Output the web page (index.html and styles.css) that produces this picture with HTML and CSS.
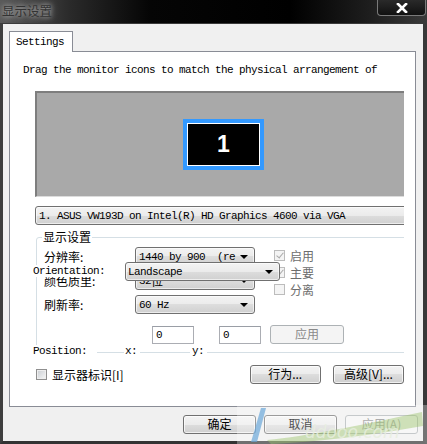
FILE: index.html
```html
<!DOCTYPE html>
<html lang="zh-CN">
<head>
    <meta charset="UTF-8">
    <title>显示设置</title>
    <link rel="stylesheet" href="styles.css">
</head>
<body>
    <div class="window">
        <div class="titlebar">
            <div class="title">显示设置</div>
            <div class="close">
                <svg width="12" height="10" viewBox="0 0 12 10"><path d="M2 1 L10 9 M10 1 L2 9" stroke="#fff" stroke-width="2.6" stroke-linecap="square"/></svg>
            </div>
        </div>
        <div class="frame">
            <div class="tabs"><div class="tab mono">Settings</div></div>
            <div class="panel">
                <div class="inner">
                    <p class="hint mono">Drag the monitor icons to match the physical arrangement of</p>
                    <div class="arrange">
                        <div class="monitor">1</div>
                    </div>
                    <div class="combo wide mono">1. ASUS VW193D on Intel(R) HD Graphics 4600 via VGA</div>

                    <fieldset class="group">
                        <legend>显示设置</legend>
                        <div class="group-body">
                            <div class="rows">
                                <div class="row"><span class="label">分辨率:</span><div class="combo mono">1440 by 900 &nbsp;(re</div></div>
                                <div class="row"><span class="label">颜色质里:</span><div class="combo mono">32 <span class="cjk">位</span></div></div>
                                <div class="row"><span class="label">刷新率:</span><div class="combo mono">60 Hz</div></div>
                            </div>
                            <div class="checks">
                                <div class="check off"><span class="box checked"></span>启用</div>
                                <div class="check off"><span class="box checked"></span>主要</div>
                                <div class="check off"><span class="box"></span>分离</div>
                            </div>
                        </div>
                        <div class="pos-inputs">
                            <div class="field mono">0</div>
                            <div class="field mono">0</div>
                            <div class="btn disabled">应用</div>
                        </div>
                    </fieldset>

                    <span class="orient mono">Orientation:</span>
                    <div class="combo landscape mono">Landscape</div>
                    <div class="position mono">
                        <span class="pos-label">Position:</span>
                        <span class="pos-x">x:</span>
                        <span class="pos-y">y:</span>
                    </div>

                    <div class="actions">
                        <div class="check ident"><span class="box"></span>显示器标识[I]</div>
                        <div class="btn">行为...</div>
                        <div class="btn">高级[V]...</div>
                    </div>
                </div>
            </div>
            <div class="footer">
                <div class="btn">确定</div>
                <div class="btn">取消</div>
                <div class="btn disabled">应用(A)</div>
            </div>
        </div>
        <svg class="watermark" width="190" height="48" viewBox="0 0 190 48">
            <rect x="0" y="9" width="190" height="39" fill="#fff" opacity="0.3"/>
            <path d="M14 46 L24 12 L29 12 L20 46 Z" fill="#6aa6d8" opacity="0.7"/>
            <path d="M30 44 C70 40 120 30 185 16 L186 30 C130 40 80 46 34 48 Z" fill="#9cc46a" opacity="0.45"/>
            <text x="68" y="42" class="wm-text">ddooo.com</text>
        </svg>
    </div>
</body>
</html>
```

FILE: styles.css
```css
* {
    box-sizing: border-box;
}
body {
    margin: 0;
    background: #000;
    font-family: "Noto Sans CJK SC", sans-serif;
    font-size: 12px;
    color: #000;
}
.mono {
    font-family: "Liberation Mono", "Noto Sans CJK SC", monospace;
    font-size: 11px;
    letter-spacing: -0.6px;
}
.cjk {
    font-family: "Noto Sans CJK SC", sans-serif;
    font-size: 12px;
    letter-spacing: 0;
}
.window {
    width: 427px;
    height: 444px;
    overflow: hidden;
    position: relative;
    background: #000;
}

/* title bar */
.titlebar {
    height: 23px;
    display: flex;
    justify-content: space-between;
    align-items: flex-start;
    background: linear-gradient(to right, #5a5a5a 0, #2a2a2a 70px, #050505 150px, #000 290px, #1e1e1e 370px, #3a3a3a 100%);
}
.title {
    padding: 3px 0 0 2px;
    font-size: 12.5px;
    line-height: 15px;
    color: #333;
    text-shadow: 0 0 5px #bbb, 0 0 9px #999;
}
.close {
    width: 49px;
    height: 16px;
    margin-right: 1px;
    border: 1px solid #7a7a7a;
    border-top: none;
    border-radius: 0 0 4px 4px;
    background: linear-gradient(#2a2a2a, #111);
    display: flex;
    justify-content: center;
    align-items: center;
}

/* window body */
.frame {
    height: 421px;
    border-top: 1px solid #3a3a3a;
    border-left: 3px solid #3e3e3e;
    border-right: 4px solid #383838;
    border-bottom: 3px solid #333;
    background: #f0f0f0;
    padding: 7px 0 0 6px;
}
.tabs {
    display: flex;
    height: 21px;
    position: relative;
    z-index: 1;
}
.tab {
    width: 64px;
    height: 21px;
    border: 1px solid #898c95;
    border-bottom: none;
    background: #fff;
    padding: 4px 0 0 6px;
    line-height: 12px;
}
.panel {
    width: 407px;
    height: 356px;
    margin-top: -1px;
    border: 1px solid #898c95;
    background: #fff;
}
.inner {
    width: 394px;
    height: 100%;
    overflow: hidden;
    position: relative;
}
.hint {
    margin: 12px 0 0 13px;
    line-height: 12px;
    white-space: nowrap;
}
.arrange {
    margin: 15px 0 0 25px;
    width: 400px;
    height: 106px;
    background: #a9a9a9;
    border-top: 2px solid #7e7e7e;
    border-left: 2px solid #7e7e7e;
    border-bottom: 1px solid #dcdcdc;
    position: relative;
}
.monitor {
    position: absolute;
    left: 146px;
    top: 26px;
    width: 81px;
    height: 51px;
    border: 4px solid #3399ff;
    box-shadow: inset 0 0 0 1px #fff;
    background: #000;
    color: #fff;
    font: bold 23px/43px "Liberation Sans", Arial, sans-serif;
    text-align: center;
}

/* combo boxes and buttons */
.combo {
    height: 19px;
    border: 1px solid #707070;
    border-radius: 3px;
    background: linear-gradient(#f3f3f3 0%, #ebebeb 50%, #dddddd 50%, #d0d0d0 100%);
    box-shadow: inset 0 0 0 1px rgba(255, 255, 255, 0.6);
    display: flex;
    align-items: center;
    padding: 0 6px 0 3px;
    white-space: nowrap;
}
.combo::after {
    content: "";
    margin-left: auto;
    border-left: 4px solid transparent;
    border-right: 4px solid transparent;
    border-top: 4px solid #000;
}
.combo.wide {
    width: 400px;
    margin: 9px 0 0 25px;
}
.btn {
    height: 19px;
    width: 73px;
    border: 1px solid #707070;
    border-radius: 3px;
    background: linear-gradient(#f3f3f3 0%, #ebebeb 50%, #dddddd 50%, #cfcfcf 100%);
    box-shadow: inset 0 0 0 1px rgba(255, 255, 255, 0.7);
    text-align: center;
    line-height: 16px;
    white-space: nowrap;
}
.btn.disabled {
    border-color: #adb2b5;
    background: #f4f4f4;
    color: #8a8a8a;
    box-shadow: none;
}

/* display settings group */
.group {
    margin: 5px 0 0 26px;
    width: 400px;
    min-width: 0;
    padding: 3px 7px 8px 7px;
    border: 1px solid #d5dfe5;
    border-radius: 3px;
}
.group legend {
    padding: 0 1px;
    margin-left: -2px;
    line-height: 14px;
    font-size: 12px;
}
.group-body {
    display: flex;
}
.rows {
    display: flex;
    flex-direction: column;
    gap: 5px;
}
.row {
    display: flex;
    align-items: center;
    height: 19px;
}
.label {
    width: 91px;
    line-height: 14px;
}
.row .combo {
    width: 120px;
}
.checks {
    margin-left: 19px;
}
.check {
    display: flex;
    align-items: center;
    height: 17px;
    line-height: 14px;
}
.check.off {
    color: #6d6d6d;
}
.box {
    width: 11px;
    height: 11px;
    margin-right: 5px;
    border: 1px solid #8f8f8f;
    background: linear-gradient(135deg, #c9cdd2, #f7f7f7);
    box-shadow: inset 0 0 0 1px #eee;
    position: relative;
}
.check.off .box {
    border-color: #bcbcbc;
    background: #f4f4f4;
    box-shadow: none;
}
.box.checked::after {
    content: "";
    position: absolute;
    left: 3px;
    top: 0px;
    width: 3px;
    height: 6px;
    border-right: 1.5px solid #a9a9a9;
    border-bottom: 1.5px solid #a9a9a9;
    transform: rotate(40deg);
}
.pos-inputs {
    display: flex;
    align-items: center;
    margin-top: 11px;
    padding-left: 108px;
}
.field {
    width: 42px;
    height: 18px;
    border: 1px solid #abadb3;
    border-top-color: #9a9ea6;
    background: #fff;
    padding-left: 3px;
    line-height: 16px;
}
.field + .field {
    margin-left: 25px;
}
.pos-inputs .btn {
    margin-left: 9px;
    width: 74px;
}

/* labels drawn over the group */
.orient {
    position: absolute;
    left: 23px;
    top: 213px;
    line-height: 12px;
    background: #fff;
    padding-right: 2px;
}
.combo.landscape {
    position: absolute;
    left: 115px;
    top: 210px;
    width: 155px;
    padding-left: 2px;
}
.position {
    position: absolute;
    left: 23px;
    top: 293px;
    display: flex;
    line-height: 12px;
}
.position span {
    background: #fff;
}
.pos-label {
    width: 64px;
}
.pos-x {
    margin-left: 27px;
    width: 16px;
    padding-left: 1px;
}
.pos-y {
    margin-left: 50px;
    width: 17px;
    padding-left: 2px;
}

.actions {
    display: flex;
    align-items: center;
    margin: 12px 0 0 26px;
    height: 19px;
}
.check.ident {
    width: 219px;
}
.actions .btn + .btn {
    margin-left: 12px;
}

.footer {
    display: flex;
    gap: 8px;
    margin-top: 8px;
    padding-left: 174px;
}

.watermark {
    position: absolute;
    left: 237px;
    top: 396px;
}
.wm-text {
    font-family: "DejaVu Sans", sans-serif;
    font-style: italic;
    font-size: 17px;
    fill: #e8efe0;
    opacity: 0.8;
}
```
